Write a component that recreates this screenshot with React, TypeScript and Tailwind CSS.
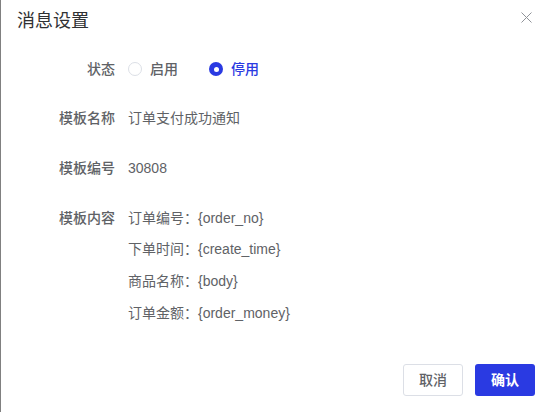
import React from "react";

const font = { fontFamily: '"Liberation Sans", "Noto Sans CJK SC", sans-serif' };

function Radio({ checked, label }: { checked: boolean; label: string }) {
  return (
    <div className="flex items-center gap-2">
      {checked ? (
        <span className="w-[14px] h-[14px] rounded-full bg-[#2a3ae2] flex items-center justify-center">
          <span className="w-[5px] h-[5px] rounded-full bg-white" />
        </span>
      ) : (
        <span className="w-[14px] h-[14px] rounded-full border border-[#dcdfe6] bg-white" />
      )}
      <span className={checked ? "text-[#2a3ae2] font-medium" : "text-[#606266] font-medium"}>{label}</span>
    </div>
  );
}

function Row({ label, children, className = "" }: { label: string; children: React.ReactNode; className?: string }) {
  return (
    <div className={"flex items-start " + className}>
      <div className="w-[98px] h-[20px] flex items-center justify-end text-[#606266] font-medium pr-0">{label}</div>
      <div className="ml-[13px]">{children}</div>
    </div>
  );
}

export default function App() {
  return (
    <div className="w-[543px] h-[412px] bg-white border-l border-[#808080] flex flex-col text-[14px]" style={font}>
      <div className="h-[40px] flex items-start justify-between pl-[16px] pr-[11px] pt-[9px]">
        <div className="text-[18px] leading-[24px] text-[#303133]">消息设置</div>
        <svg width="11" height="11" viewBox="0 0 11 11" className="mt-[3px]">
          <path d="M0.5 0.5 L10.5 10.5 M10.5 0.5 L0.5 10.5" stroke="#909399" strokeWidth="1" />
        </svg>
      </div>
      <div className="pl-[16px] pt-[19px] flex flex-col">
        <Row label="状态">
          <div className="flex items-center h-[20px] gap-[31px]">
            <Radio checked={false} label="启用" />
            <Radio checked={true} label="停用" />
          </div>
        </Row>
        <Row label="模板名称" className="mt-[29px]">
          <div className="h-[20px] flex items-center text-[#606266]">订单支付成功通知</div>
        </Row>
        <Row label="模板编号" className="mt-[30px]">
          <div className="h-[20px] flex items-center text-[#606266]">30808</div>
        </Row>
        <Row label="模板内容" className="mt-[30px]">
          <div className="flex flex-col gap-[11.7px] text-[#606266]">
            <div className="h-[20px] flex items-center">订单编号：{"{order_no}"}</div>
            <div className="h-[20px] flex items-center">下单时间：{"{create_time}"}</div>
            <div className="h-[20px] flex items-center">商品名称：{"{body}"}</div>
            <div className="h-[20px] flex items-center">订单金额：{"{order_money}"}</div>
          </div>
        </Row>
      </div>
      <div className="mt-auto flex justify-end gap-[12px] pr-[8px] pb-[16px]">
        <button className="w-[60px] h-[32px] border border-[#dcdfe6] rounded-[3px] bg-white text-[#606266] font-medium">取消</button>
        <button className="w-[60px] h-[32px] rounded-[3px] bg-[#2a3ae2] text-white font-bold">确认</button>
      </div>
    </div>
  );
}
